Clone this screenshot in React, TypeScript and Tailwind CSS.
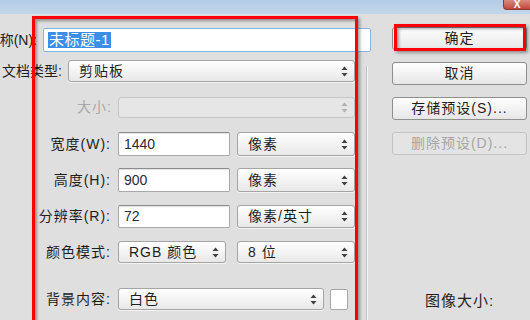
const font = "font-['Liberation_Sans','Noto_Sans_CJK_SC',sans-serif]";

function Arrows({ dim }: { dim?: boolean }) {
  return (
    <svg width="7" height="11" viewBox="0 0 7 11" className="shrink-0">
      <path d="M3.5 0.5 L6.5 4 L0.5 4 Z" fill={dim ? "#b0b0b0" : "#404040"} />
      <path d="M0.5 7 L6.5 7 L3.5 10.5 Z" fill={dim ? "#b0b0b0" : "#404040"} />
    </svg>
  );
}

function Select({ w, h, text, dim }: { w: string; h: string; text?: string; dim?: boolean }) {
  return (
    <div
      className={`${w} ${h} shrink-0 flex items-center justify-between pl-[10px] pr-[6px] rounded-[3px] border ${
        dim
          ? "border-[#c6c6c6] bg-[#e6e6e6]"
          : "border-[#a4a4a4] bg-gradient-to-b from-[#ffffff] to-[#e8e8e8] shadow-[0_1px_0_#f4f4f4]"
      }`}
    >
      <span className="text-[14px] tracking-[1px] text-[#1e1e1e]">{text}</span>
      <Arrows dim={dim} />
    </div>
  );
}

function Input({ w, h, value }: { w: string; h: string; value: string }) {
  return (
    <div
      className={`${w} ${h} shrink-0 flex items-center pl-[5px] bg-white border border-[#a8a8a8] border-t-[#8c8c8c] rounded-[2px] shadow-[inset_0_1px_1px_rgba(0,0,0,0.12)]`}
    >
      <span className="text-[14px] text-[#2a2a3a]">{value}</span>
    </div>
  );
}

function Label({ w, text, dim, tight }: { w: string; text: string; dim?: boolean; tight?: boolean }) {
  return (
    <div
      className={`${w} shrink-0 flex justify-end text-[14px] whitespace-nowrap ${
        tight ? "tracking-[0px]" : "tracking-[1px]"
      } ${dim ? "text-[#a8a8a8]" : "text-[#1e1e1e]"}`}
    >
      <span>{text}</span>
    </div>
  );
}

function Button({ text, dim }: { text: string; dim?: boolean }) {
  return (
    <div
      className={`w-[135px] h-[23px] flex items-center justify-center rounded-[3px] border text-[14px] tracking-[1px] ${
        dim
          ? "border-[#c4c4c4] bg-[#e4e4e4] text-[#a6a6a6]"
          : "border-[#8f8f8f] bg-gradient-to-b from-[#ffffff] to-[#e6e6e6] text-[#1e1e1e]"
      }`}
    >
      {text}
    </div>
  );
}

export default function App() {
  return (
    <div className={`relative w-[530px] h-[320px] overflow-hidden bg-[#dfdfdf] ${font}`}>
      <div className="h-[14px] flex justify-end bg-gradient-to-b from-[#b3cbe5] to-[#c3d6eb]">
        <div className="w-[27px] h-[10px] flex items-end justify-center rounded-bl-[4px] bg-gradient-to-b from-[#d98a7e] to-[#c2463a] border border-[#8a3a30] border-t-0 border-r-0">
          <span className="text-white text-[10px] leading-[9px] font-bold">X</span>
        </div>
      </div>

      <div className="flex">
        {/* form */}
        <div className="w-[372px] shrink-0 flex flex-col">
          <div className="mt-[14px] h-[24px] flex items-center">
            <Label w="w-[37px]" text="称(N):" tight />
            <div className="ml-[6px] w-[328px] h-[24px] flex items-center pl-[4px] bg-white border border-[#86b6e6] rounded-[2px]">
              <span className="bg-[#3c8fe6] text-white text-[15px] leading-[16px] px-[1px] tracking-[0.5px]">
                未标题-1
              </span>
            </div>
          </div>

          <div className="flex">
            <div className="w-[358px] shrink-0 flex flex-col">
              <div className="mt-[8px] h-[22px] flex items-center">
                <Label w="w-[62px]" text="文档类型:" tight />
                <div className="ml-[6px]">
                  <Select w="w-[287px]" h="h-[22px]" text="剪贴板" />
                </div>
              </div>

              <div className="mt-[15px] h-[21px] flex items-center">
                <Label w="w-[112px]" text="大小:" dim />
                <div className="ml-[6px]">
                  <Select w="w-[237px]" h="h-[21px]" dim />
                </div>
              </div>

              <div className="mt-[14px] h-[24px] flex items-center">
                <Label w="w-[111px]" text="宽度(W):" />
                <div className="ml-[7px] flex gap-[7px]">
                  <Input w="w-[112px]" h="h-[24px]" value="1440" />
                  <Select w="w-[118px]" h="h-[24px]" text="像素" />
                </div>
              </div>

              <div className="mt-[12px] h-[24px] flex items-center">
                <Label w="w-[111px]" text="高度(H):" />
                <div className="ml-[7px] flex gap-[7px]">
                  <Input w="w-[112px]" h="h-[24px]" value="900" />
                  <Select w="w-[118px]" h="h-[24px]" text="像素" />
                </div>
              </div>

              <div className="mt-[13px] h-[23px] flex items-center">
                <Label w="w-[111px]" text="分辨率(R):" />
                <div className="ml-[7px] flex gap-[7px]">
                  <Input w="w-[112px]" h="h-[23px]" value="72" />
                  <Select w="w-[118px]" h="h-[23px]" text="像素/英寸" />
                </div>
              </div>

              <div className="mt-[13px] h-[22px] flex items-center">
                <Label w="w-[111px]" text="颜色模式:" />
                <div className="ml-[7px] flex gap-[11px]">
                  <Select w="w-[108px]" h="h-[22px]" text="RGB 颜色" />
                  <Select w="w-[118px]" h="h-[22px]" text="8 位" />
                </div>
              </div>

              <div className="mt-[25px] h-[22px] flex items-center">
                <Label w="w-[111px]" text="背景内容:" />
                <div className="ml-[7px] flex items-center gap-[6px]">
                  <Select w="w-[206px]" h="h-[22px]" text="白色" />
                  <div className="w-[18px] h-[21px] bg-white border border-[#a6a6a6] rounded-[2px]" />
                </div>
              </div>
            </div>
            <div className="ml-[8px] mt-[14px] w-[2px] h-[300px] border-l border-l-[#bdbdbd] border-r border-r-[#f6f6f6]" />
          </div>
        </div>

        {/* buttons */}
        <div className="ml-[20px] flex flex-col">
          <div className="mt-[13px] flex flex-col gap-[12px]">
            <Button text="确定" />
            <Button text="取消" />
            <Button text="存储预设(S)..." />
            <Button text="删除预设(D)..." dim />
          </div>
          <div className="mt-[135px] pl-[33px] text-[15px] tracking-[1px] text-[#1e1e1e]">图像大小:</div>
        </div>
      </div>

      {/* annotation boxes */}
      <div className="absolute left-[32px] top-[16px] w-[326px] h-[320px] border-[3px] border-[#ff0000] shadow-[2px_2px_3px_rgba(0,0,0,0.35),inset_2px_2px_3px_rgba(0,0,0,0.35)]" />
      <div className="absolute left-[394px] top-[24px] w-[132px] h-[27px] border-[3px] border-[#ff0000] shadow-[2px_2px_3px_rgba(0,0,0,0.35),inset_2px_2px_3px_rgba(0,0,0,0.35)]" />
    </div>
  );
}
